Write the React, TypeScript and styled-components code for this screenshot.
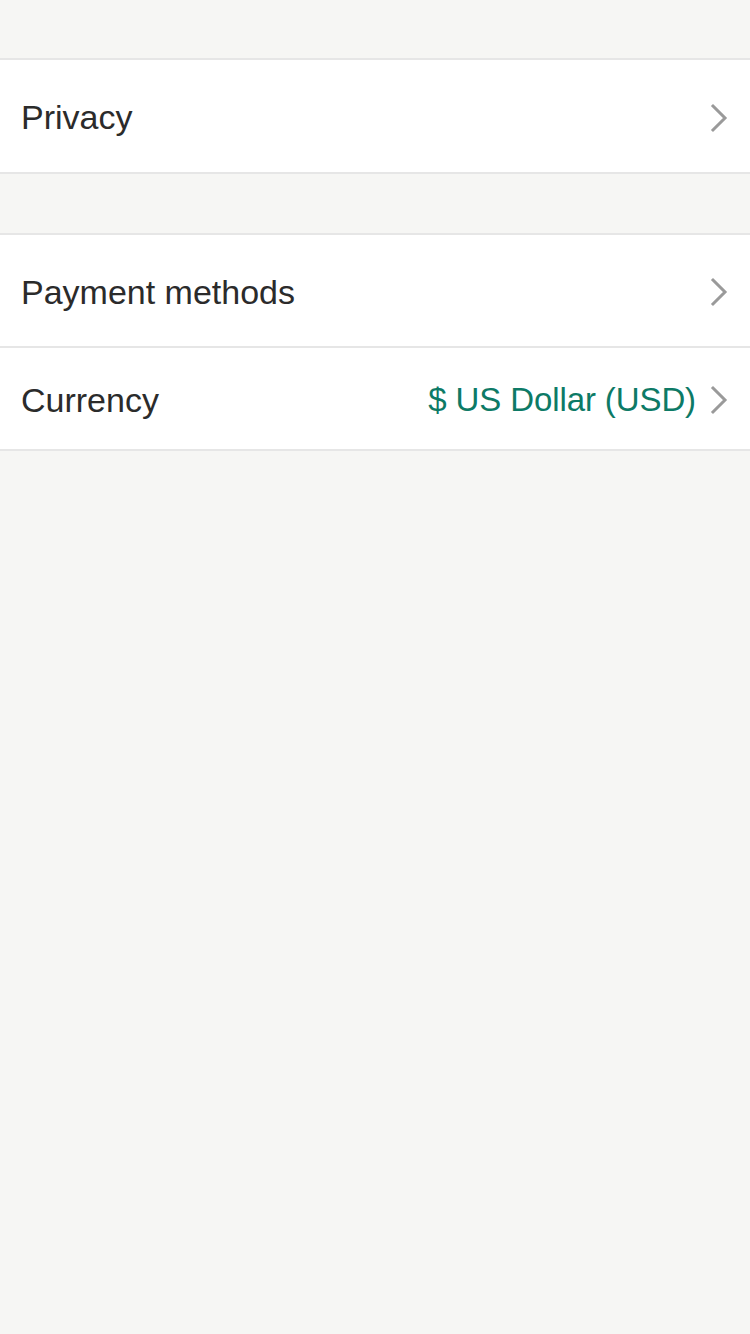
import React, { FC } from "react";
import styled, { createGlobalStyle } from "styled-components";

const GlobalStyle = createGlobalStyle`
    html, body {
        margin: 0;
        padding: 0;
        background: #f6f6f4;
    }
    body {
        font-family: "Liberation Sans", Arial, sans-serif;
        -webkit-font-smoothing: antialiased;
    }
`;

const Page = styled.div`
    min-height: 1334px;
    background: #f6f6f4;
    display: flex;
    flex-direction: column;
    padding-top: 58px;
    gap: 59px;
    box-sizing: border-box;
`;

const Group = styled.div`
    display: flex;
    flex-direction: column;
    background: #ffffff;
    border-top: 2px solid #e6e6e6;
    border-bottom: 2px solid #e6e6e6;
`;

const Row = styled.div<{ $height: number; $divider?: boolean }>`
    display: flex;
    align-items: center;
    box-sizing: border-box;
    height: ${(p) => p.$height}px;
    padding: 3px 22px 0 21px;
    border-top: ${(p) => (p.$divider ? "2px solid #e6e6e6" : "none")};
`;

const Label = styled.span`
    flex: 1;
    font-size: 34px;
    color: #2b2b2b;
`;

const Value = styled.span`
    font-size: 33px;
    letter-spacing: -0.1px;
    color: #0d7a66;
    margin-right: 14px;
`;

const Chevron: FC = () => (
    <svg width="18" height="30" viewBox="0 0 18 30" fill="none">
        <path d="M3 3 L15 15 L3 27" stroke="#9a9a9a" strokeWidth="3" strokeLinecap="square" />
    </svg>
);

const App: FC = () => {
    return (
        <>
            <GlobalStyle />
            <Page>
                <Group>
                    <Row $height={112}>
                        <Label>Privacy</Label>
                        <Chevron />
                    </Row>
                </Group>
                <Group>
                    <Row $height={111}>
                        <Label>Payment methods</Label>
                        <Chevron />
                    </Row>
                    <Row $height={103} $divider>
                        <Label>Currency</Label>
                        <Value>$ US Dollar (USD)</Value>
                        <Chevron />
                    </Row>
                </Group>
            </Page>
        </>
    );
};

export default App;
